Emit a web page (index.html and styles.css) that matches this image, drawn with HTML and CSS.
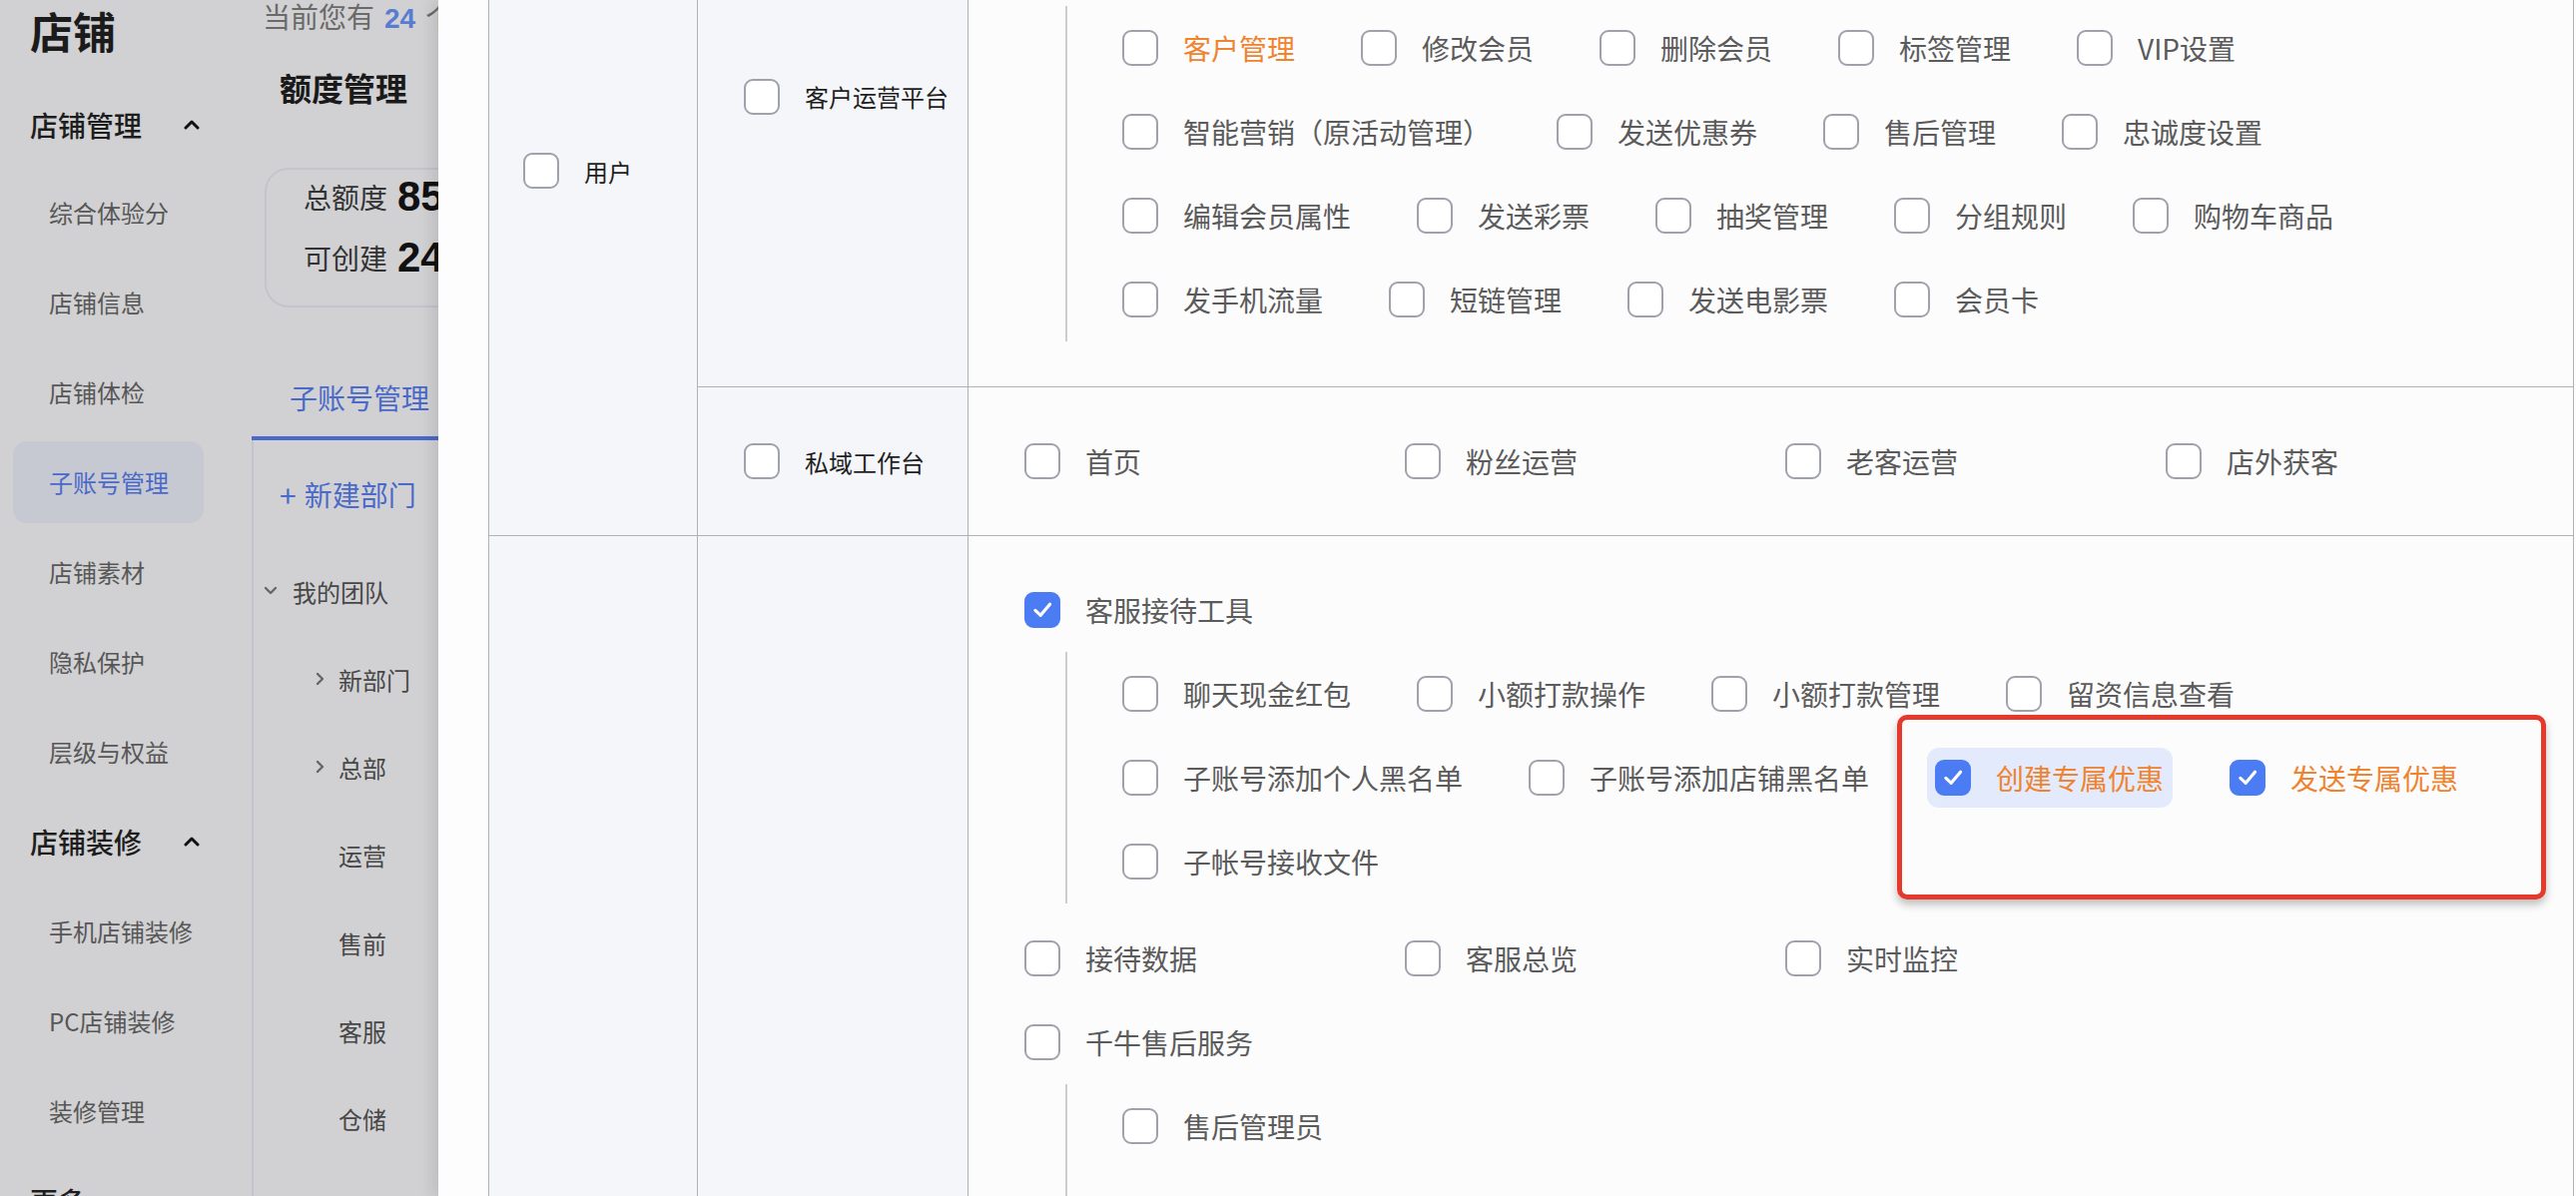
FILE: index.html
```html
<!DOCTYPE html>
<html lang="zh-CN">
<head>
    <meta charset="UTF-8">
    <meta name="viewport" content="width=device-width, initial-scale=1.0">
    <title>子账号管理 - 权限设置</title>
    <link rel="stylesheet" href="styles.css">
</head>
<body>
<div class="screen">
    <div class="backdrop">
        <aside class="side">
            <div class="brand">店铺</div>
            <div class="menu-head">店铺管理
                <svg class="caret" width="16" height="10" viewBox="0 0 16 10"><polyline points="2,8 8,2 14,8"/></svg>
            </div>
            <div class="menu-item">综合体验分</div>
            <div class="menu-item">店铺信息</div>
            <div class="menu-item">店铺体检</div>
            <div class="menu-item active">子账号管理</div>
            <div class="menu-item">店铺素材</div>
            <div class="menu-item">隐私保护</div>
            <div class="menu-item">层级与权益</div>
            <div class="menu-head tall">店铺装修
                <svg class="caret" width="16" height="10" viewBox="0 0 16 10"><polyline points="2,8 8,2 14,8"/></svg>
            </div>
            <div class="menu-item">手机店铺装修</div>
            <div class="menu-item">PC店铺装修</div>
            <div class="menu-item">装修管理</div>
            <div class="menu-head tall">更多</div>
        </aside>

        <main class="main">
            <div class="quota-tip">当前您有<b>24</b>个子账号名额可用</div>
            <h2 class="quota-title">额度管理</h2>
            <div class="quota-card">
                <div class="quota-row"><span>总额度</span><strong>85</strong></div>
                <div class="quota-row"><span>可创建</span><strong>24</strong></div>
            </div>
            <div class="tabs"><div class="tab">子账号管理</div></div>
            <div class="tree">
                <div class="tree-add"><span class="plus">+</span>新建部门</div>
                <div class="tree-node lv0">
                    <svg class="arrow-down" width="16" height="10" viewBox="0 0 16 10"><polyline points="3,2 8,7 13,2"/></svg>我的团队
                </div>
                <div class="tree-node lv1">
                    <svg class="arrow-right" width="10" height="16" viewBox="0 0 10 16"><polyline points="2,3 7,8 2,13"/></svg>新部门
                </div>
                <div class="tree-node lv1">
                    <svg class="arrow-right" width="10" height="16" viewBox="0 0 10 16"><polyline points="2,3 7,8 2,13"/></svg>总部
                </div>
                <div class="tree-node leaf">运营</div>
                <div class="tree-node leaf">售前</div>
                <div class="tree-node leaf">客服</div>
                <div class="tree-node leaf">仓储</div>
            </div>
        </main>
    </div>

    <section class="drawer">
        <table class="perm">
            <colgroup>
                <col class="col-a">
                <col class="col-b">
                <col>
            </colgroup>
            <tr>
                <td class="c1" rowspan="2">
                    <label class="opt label"><span class="box"></span>用户</label>
                </td>
                <td class="c2">
                    <label class="opt label"><span class="box"></span>客户运营平台</label>
                </td>
                <td class="c3">
                    <div class="grid4">
                        <label class="opt"><span class="box"></span>客户概况</label>
                        <label class="opt"><span class="box"></span>会员中心</label>
                        <label class="opt"><span class="box"></span>权益中心</label>
                        <label class="opt"><span class="box"></span>数据分析</label>
                    </div>
                    <label class="opt"><span class="box"></span>会员管理</label>
                    <div class="sub">
                        <label class="opt hot"><span class="box"></span>客户管理</label>
                        <label class="opt"><span class="box"></span>修改会员</label>
                        <label class="opt"><span class="box"></span>删除会员</label>
                        <label class="opt"><span class="box"></span>标签管理</label>
                        <label class="opt"><span class="box"></span>VIP设置</label>
                        <label class="opt"><span class="box"></span>智能营销（原活动管理）</label>
                        <label class="opt"><span class="box"></span>发送优惠券</label>
                        <label class="opt"><span class="box"></span>售后管理</label>
                        <label class="opt"><span class="box"></span>忠诚度设置</label>
                        <label class="opt"><span class="box"></span>编辑会员属性</label>
                        <label class="opt"><span class="box"></span>发送彩票</label>
                        <label class="opt"><span class="box"></span>抽奖管理</label>
                        <label class="opt"><span class="box"></span>分组规则</label>
                        <label class="opt"><span class="box"></span>购物车商品</label>
                        <label class="opt"><span class="box"></span>发手机流量</label>
                        <label class="opt"><span class="box"></span>短链管理</label>
                        <label class="opt"><span class="box"></span>发送电影票</label>
                        <label class="opt"><span class="box"></span>会员卡</label>
                    </div>
                </td>
            </tr>
            <tr>
                <td class="c2">
                    <label class="opt label"><span class="box"></span>私域工作台</label>
                </td>
                <td class="c3">
                    <div class="grid4">
                        <label class="opt"><span class="box"></span>首页</label>
                        <label class="opt"><span class="box"></span>粉丝运营</label>
                        <label class="opt"><span class="box"></span>老客运营</label>
                        <label class="opt"><span class="box"></span>店外获客</label>
                    </div>
                </td>
            </tr>
            <tr>
                <td class="c1"></td>
                <td class="c2"></td>
                <td class="c3">
                    <label class="opt"><span class="box on"><svg viewBox="0 0 36 36"><path d="M10 18.5 L16 24 L26.5 11.5"/></svg></span>客服接待工具</label>
                    <div class="sub">
                        <label class="opt"><span class="box"></span>聊天现金红包</label>
                        <label class="opt"><span class="box"></span>小额打款操作</label>
                        <label class="opt"><span class="box"></span>小额打款管理</label>
                        <label class="opt"><span class="box"></span>留资信息查看</label>
                        <label class="opt"><span class="box"></span>子账号添加个人黑名单</label>
                        <label class="opt"><span class="box"></span>子账号添加店铺黑名单</label>
                        <label class="opt hot pick"><span class="box on"><svg viewBox="0 0 36 36"><path d="M10 18.5 L16 24 L26.5 11.5"/></svg></span>创建专属优惠</label>
                        <label class="opt hot"><span class="box on"><svg viewBox="0 0 36 36"><path d="M10 18.5 L16 24 L26.5 11.5"/></svg></span>发送专属优惠</label>
                        <label class="opt"><span class="box"></span>子帐号接收文件</label>
                    </div>
                    <div class="grid4">
                        <label class="opt"><span class="box"></span>接待数据</label>
                        <label class="opt"><span class="box"></span>客服总览</label>
                        <label class="opt"><span class="box"></span>实时监控</label>
                    </div>
                    <label class="opt"><span class="box"></span>千牛售后服务</label>
                    <div class="sub last">
                        <label class="opt"><span class="box"></span>售后管理员</label>
                    </div>
                </td>
            </tr>
        </table>
        <div class="mark"></div>
    </section>
</div>
</body>
</html>
```

FILE: styles.css
```css
body {
    margin: 0;
    font-family: "Noto Sans CJK SC", "Noto Sans", sans-serif;
    background: #fdfdfd;
}
.screen {
    display: flex;
    height: 1198px;
    overflow: hidden;
}

/* page behind the drawer (masked) */
.backdrop {
    width: 439px;
    flex: none;
    display: flex;
    background: #d1d1d3;
    overflow: hidden;
}
.side {
    width: 252px;
    flex: none;
    display: flex;
    flex-direction: column;
}
.brand {
    flex: none;
    height: 82px;
    line-height: 60px;
    padding-left: 30px;
    font-size: 43px;
    font-weight: 700;
    color: #1b1b1b;
}
.menu-head {
    flex: none;
    height: 86px;
    display: flex;
    align-items: center;
    padding-left: 30px;
    font-size: 28px;
    font-weight: 500;
    color: #1d1d1d;
}
.menu-head.tall {
    height: 90px;
}
.caret {
    margin-left: 42px;
    fill: none;
    stroke: #111;
    stroke-width: 3;
    stroke-linecap: round;
    stroke-linejoin: round;
}
.menu-item {
    flex: none;
    width: 191px;
    height: 82px;
    margin: 4px 0 4px 13px;
    padding-left: 36px;
    box-sizing: border-box;
    border-radius: 14px;
    line-height: 82px;
    font-size: 24px;
    color: #575757;
}
.menu-item.active {
    background: #c7c9d2;
    color: #4a69c9;
}

.main {
    flex: 1;
    min-width: 0;
    white-space: nowrap;
}
.quota-tip {
    height: 32px;
    line-height: 32px;
    padding-left: 11px;
    font-size: 28px;
    color: #6a6a6a;
}
.quota-tip b {
    margin: 0 10px;
    color: #5a7bd2;
    font-weight: 600;
    font-family: "Liberation Sans", Arial, sans-serif;
}
.quota-title {
    margin: 33px 0 0 28px;
    font-size: 32px;
    line-height: 44px;
    font-weight: 700;
    color: #1a1a1a;
}
.quota-card {
    margin: 59px 0 0 13px;
    width: 420px;
    height: 140px;
    box-sizing: border-box;
    padding: 2px 0 0 37px;
    border: 2px solid #c3c5cc;
    border-radius: 24px;
}
.quota-row {
    height: 50px;
    display: flex;
    align-items: center;
    gap: 10px;
    font-size: 28px;
    color: #333;
}
.quota-row + .quota-row {
    margin-top: 11px;
}
.quota-row strong {
    font-family: "Liberation Sans", Arial, sans-serif;
    font-size: 42px;
    font-weight: 600;
    color: #111;
}
.tabs {
    margin-top: 52px;
    border-bottom: 4px solid #4a69c9;
}
.tab {
    height: 77px;
    line-height: 77px;
    padding-left: 38px;
    font-size: 28px;
    color: #4a69c9;
}
.tree {
    border-left: 2px solid #c2c4cb;
    padding-top: 10px;
    height: 800px;
}
.tree-add {
    height: 88px;
    margin-bottom: 9px;
    display: flex;
    align-items: center;
    padding-left: 26px;
    font-size: 28px;
    color: #4a69c9;
}
.plus {
    margin-right: 8px;
    font-size: 30px;
}
.tree-node {
    height: 88px;
    display: flex;
    align-items: center;
    font-size: 24px;
    color: #474747;
}
.tree-node svg {
    fill: none;
    stroke: #666;
    stroke-width: 2.4;
    stroke-linecap: round;
    stroke-linejoin: round;
}
.tree-node.lv0 {
    padding-left: 9px;
}
.arrow-down {
    margin-right: 14px;
}
.tree-node.lv1 {
    padding-left: 62px;
}
.arrow-right {
    margin-right: 13px;
}
.tree-node.leaf {
    padding-left: 85px;
}

/* permission drawer */
.drawer {
    position: relative;
    flex: 1;
    height: 1198px;
    padding-left: 50px;
    background: #fdfdfd;
    box-shadow: -6px 0 14px rgba(0, 0, 0, 0.10);
    overflow: hidden;
}
.perm {
    width: 2089px;
    margin-top: -195px;
    table-layout: fixed;
    border-collapse: collapse;
}
.col-a {
    width: 209px;
}
.col-b {
    width: 271px;
}
.perm td {
    border: 1px solid #b0b2b9;
    vertical-align: middle;
}
.c1 {
    padding-left: 34px;
    background: #f5f6f9;
}
.c2 {
    padding-left: 46px;
    background: #f5f6f9;
}
.c3 {
    padding: 32px 56px;
    background: #fcfcfd;
}
.opt {
    display: flex;
    align-items: center;
    height: 84px;
    font-size: 28px;
    color: #5b5b5b;
    white-space: nowrap;
}
.opt.label {
    font-size: 24px;
    color: #1f1f1f;
}
.opt.hot {
    color: #f0832e;
}
.opt.pick {
    height: 60px;
    margin: 12px -9px 12px -8px;
    padding: 0 9px 0 8px;
    border-radius: 12px;
    background: #e3eafb;
}
.box {
    flex: none;
    width: 36px;
    height: 36px;
    margin-right: 25px;
    box-sizing: border-box;
    border: 2px solid #9fa1ad;
    border-radius: 9px;
    background: #fff;
}
.box.on {
    border-color: #4b7cf3;
    background: #4b7cf3;
}
.box.on svg {
    display: block;
    width: 32px;
    height: 32px;
    fill: none;
    stroke: #fff;
    stroke-width: 3.6;
    stroke-linecap: round;
    stroke-linejoin: round;
}
.grid4 {
    display: grid;
    grid-template-columns: repeat(4, 381px);
}
.sub {
    display: flex;
    flex-wrap: wrap;
    column-gap: 66px;
    margin: 0 0 13px 41px;
    padding-left: 55px;
    border-left: 2px solid #cdcdd1;
}
.sub.last {
    padding-bottom: 30px;
}

/* red annotation frame */
.mark {
    position: absolute;
    left: 1461px;
    top: 716px;
    width: 650px;
    height: 185px;
    box-sizing: border-box;
    border: 5px solid #e5392b;
    border-radius: 10px;
    box-shadow: 0 5px 8px rgba(0, 0, 0, 0.25);
    pointer-events: none;
}
```
